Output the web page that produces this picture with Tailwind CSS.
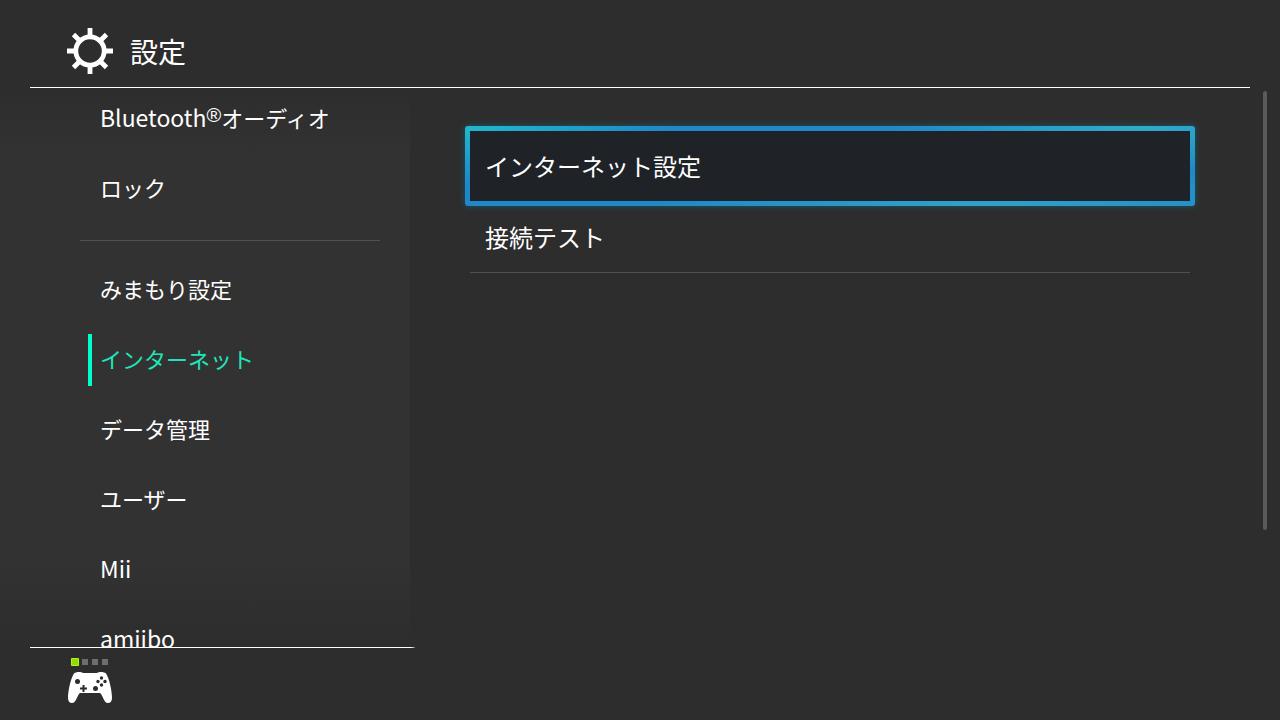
<!DOCTYPE html>
<html lang="ja">
<head>
<meta charset="utf-8">
<meta name="viewport" content="width=device-width, initial-scale=1">
<title>設定</title>
<script src="https://cdn.jsdelivr.net/npm/@tailwindcss/browser@4"></script>
</head>
<body class="flex h-screen flex-col overflow-hidden bg-[#2d2d2d] font-['Noto_Sans_CJK_JP',sans-serif] text-white">
  <header class="mx-[30px] flex h-[88px] shrink-0 items-center gap-4 border-b border-white pt-[14px] pl-9">
    <svg class="size-12" viewBox="0 0 48 48" fill="none" stroke="#fff" aria-hidden="true">
      <circle cx="24" cy="24" r="14.200" stroke-width="4.800"/>
      <path stroke-width="4.800" d="M24 1v9M24 38v9M1 24h9M38 24h9M7.500 7.500l7 7M33.500 33.500l7 7M40.500 7.500l-7 7M14.500 33.500l-7 7"/>
    </svg>
    <h1 class="text-[28px] leading-8">設定</h1>
  </header>

  <div class="flex min-h-0 flex-1">
    <nav class="h-full w-[410px] shrink-0 overflow-hidden bg-[linear-gradient(#2d2d2d,#323232_12%,#323232_85%,#2d2d2d)] text-[22px] leading-8" aria-label="設定">
      <ul class="flex flex-col gap-[18px] pt-[5px] pr-[30px] pl-[88px]">
        <li><a href="#bluetooth" class="flex h-[52px] items-center pb-1 pl-3"><span><span class="text-[23px]">Bluetooth</span><sup class="static align-[5px] font-['Liberation_Sans',sans-serif] text-xl leading-none">®</sup>オーディオ</span></a></li>
        <li><a href="#lock" class="flex h-[52px] items-center pb-1 pl-3">ロック</a></li>
        <li class="mt-[7px] -ml-2 mb-[5px] h-px bg-[#505050]" role="separator"></li>
        <li><a href="#parental" class="flex h-[52px] items-center pb-1 pl-3">みまもり設定</a></li>
        <li><a href="#internet" aria-current="page" class="flex h-[52px] items-center border-l-4 border-[#00ffcb] pb-1 pl-2 text-[#1ee6b9]">インターネット</a></li>
        <li><a href="#data" class="flex h-[52px] items-center pb-1 pl-3">データ管理</a></li>
        <li><a href="#user" class="flex h-[52px] items-center pb-1 pl-3">ユーザー</a></li>
        <li><a href="#mii" class="flex h-[52px] items-center pb-1 pl-3 text-[23px]">Mii</a></li>
        <li><a href="#amiibo" class="flex h-[52px] items-center pb-1 pl-3 text-[23px]">amiibo</a></li>
      </ul>
    </nav>
    <main class="min-w-0 flex-1 pt-[38px] pr-[68px] pl-[55px] text-2xl leading-8">
      <div class="rounded-[3px] bg-[#1f88c8] bg-[radial-gradient(28%_70%_at_0_0,#22b8cc,transparent),radial-gradient(35%_60%_at_92%_0,#30abc9,transparent),radial-gradient(45%_60%_at_70%_100%,#30a2c9,transparent)] p-[5px] shadow-[0_0_6px_#1a5a6a]">
        <button type="button" class="flex h-[70px] w-full items-center bg-[#1f2328] pl-[15px] text-left">インターネット設定</button>
      </div>
      <button type="button" class="mx-[5px] flex h-[67px] w-[calc(100%-10px)] items-center border-b border-[#505050] pb-1 pl-[15px] text-left">接続テスト</button>
    </main>
    <div class="mt-[3px] mr-[13px] h-[439px] w-1 shrink-0 rounded-sm bg-[#5a5a5a]"></div>
  </div>

  <footer class="h-[73px] shrink-0">
    <div class="ml-[30px] h-px w-[385px] bg-linear-to-r from-white from-99% to-[#707070]"></div>
    <svg class="mt-2 ml-[66px] h-12 w-12" viewBox="0 0 48 48" role="img" aria-label="コントローラー 1">
      <path fill="#8fdc00" stroke="#b4f51e" d="M5.500 2.500h7v7h-7z"/>
      <path fill="#6e6e6e" d="M16 3h6v6h-6zM26 3h6v6h-6zM36 3h6v6h-6z"/>
      <path fill="#fff" d="M8 17.500c2-2 7-2 9-.500h14c2-1.500 7-1.500 9 .500 3 4 6 17 6 24.500 0 3-1.500 5-4 5-4.500 0-5-8-8-10H14c-3 2-3.500 10-8 10-2.500 0-4-2-4-5 0-7.500 3-20.500 6-24.500z"/>
      <g fill="#2d2d2d"><circle cx="11.500" cy="25.500" r="2.500"/><circle cx="29.500" cy="32.500" r="2.500"/><circle cx="35.500" cy="22" r="1.700"/><circle cx="35.500" cy="29" r="1.700"/><circle cx="32" cy="25.500" r="1.700"/><circle cx="39" cy="25.500" r="1.700"/><path d="M16.500 29h2v2.500H21v2h-2.500V36h-2v-2.500H14v-2h2.500z"/></g>
    </svg>
  </footer>
</body>
</html>
